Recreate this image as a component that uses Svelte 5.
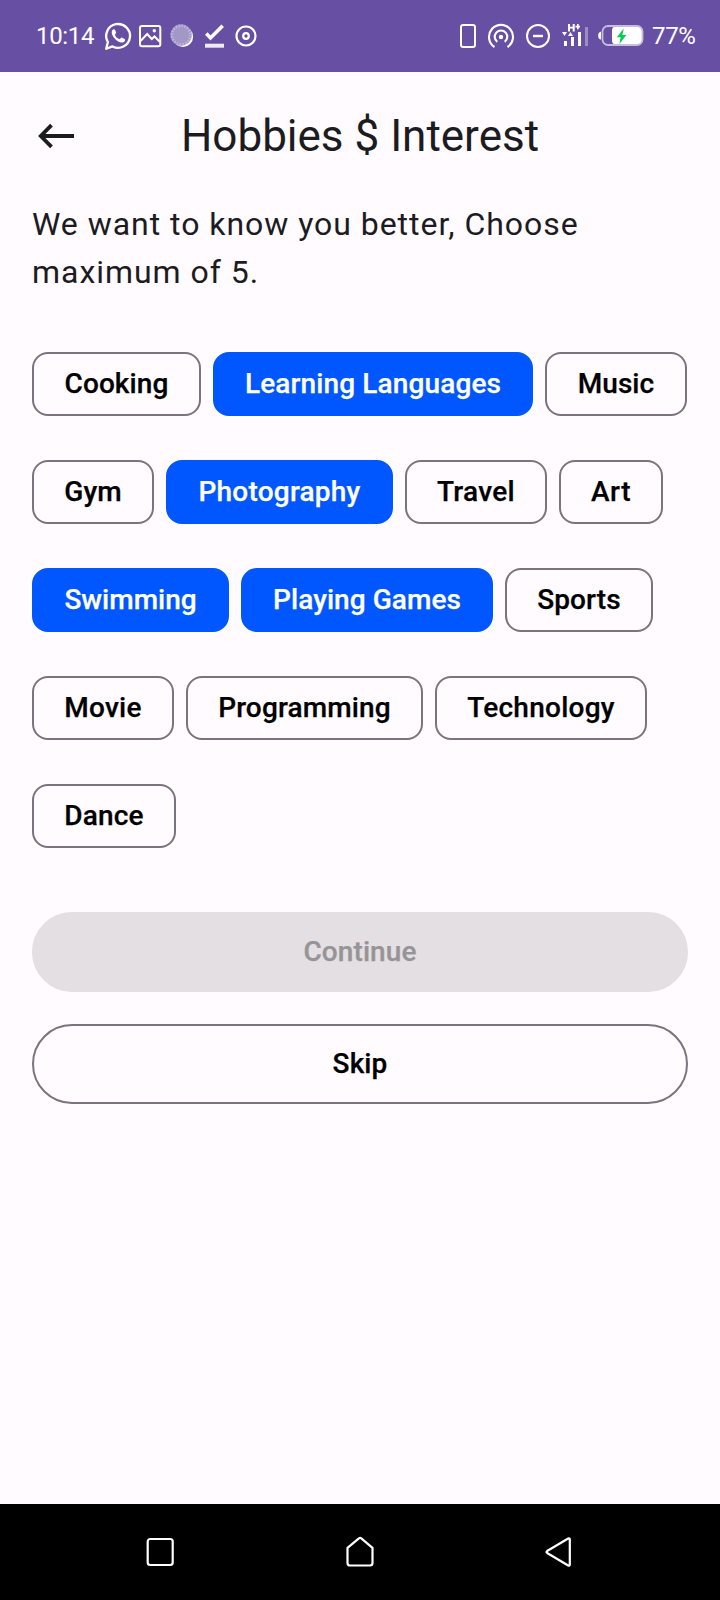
<script>
  const max = 5;
  let hobbies = $state([
    { name: 'Cooking', width: 169, tracking: 0.1, on: false },
    { name: 'Learning Languages', width: 320, tracking: 0.13, on: true },
    { name: 'Music', width: 142, tracking: 0.05, on: false },
    { name: 'Gym', width: 122, tracking: 0.1, on: false },
    { name: 'Photography', width: 227, tracking: 0.22, on: true },
    { name: 'Travel', width: 142, tracking: 0.3, on: false },
    { name: 'Art', width: 104, tracking: 0.5, on: false },
    { name: 'Swimming', width: 197, tracking: 0, on: true },
    { name: 'Playing Games', width: 252, tracking: 0.05, on: true },
    { name: 'Sports', width: 148, tracking: 0.12, on: false },
    { name: 'Movie', width: 142, tracking: 0.3, on: false },
    { name: 'Programming', width: 237, tracking: 0.15, on: false },
    { name: 'Technology', width: 212, tracking: 0.25, on: false },
    { name: 'Dance', width: 144, tracking: 0.15, on: false }
  ]);
  let count = $derived(hobbies.filter((h) => h.on).length);

  function toggle(h) {
    if (h.on || count < max) h.on = !h.on;
  }
</script>

<div class="screen">
  <div class="status">
    <span class="time">10:14</span>
    <svg class="left-icons" width="160" height="40" viewBox="100 16 160 40" fill="none" stroke="#fff" stroke-width="2">
      <path d="M106.2 48.8l1.7-6.8a11.9 11.9 0 1 1 4.6 4.4z" stroke-width="2.3" stroke-linejoin="round" />
      <path d="M112.3 30.2c.8-1.3 2.3-1.3 2.8-.2l1 2.6c.2.8-1.2 1.8-1.1 2.3.9 2 2.5 3.6 4.6 4.3.6.1 1.6-1.8 2.2-1.6l2.8 1.3c1.1.6.3 2.4-.8 3.1-1.6 1-3.7.5-5.6-.5-2.5-1.4-4.4-3.4-5.6-5.9-.9-2-1.2-3.9-.3-5.4z" fill="#fff" stroke="none" />
      <rect x="140" y="26" width="20.3" height="20.3" rx="2" />
      <path d="M140.5 41l6.700-7 4.600 5 2.700-2.500 5.500 5.500" />
      <circle cx="154.3" cy="30.7" r="1.7" fill="#fff" stroke="none" />
      <circle cx="182.9" cy="36.800" r="10.200" fill="#fff" stroke="none" />
      <circle cx="181.100" cy="35" r="10.700" fill="#a397c8" stroke="none" />
      <circle cx="181.100" cy="35" r="9.200" stroke="#c3badc" stroke-width="2.600" stroke-dasharray="1.200 1.700" />
      <path d="M206.3 33.6l4.2 4.3 12.2-12.2" stroke-width="3.6" />
      <path d="M205 45.7h19" stroke-width="4" stroke="#eeeaf6" />
      <circle cx="246" cy="36" r="9.5" stroke-width="2.2" />
      <circle cx="246" cy="36" r="2.800" stroke-width="2.2" />
    </svg>
    <svg class="right-icons" width="190" height="40" viewBox="456 16 190 40" fill="none" stroke="#fff" stroke-width="2">
      <rect x="461" y="25" width="14" height="22" rx="2.3" />
      <path d="M494.5 47a12 12 0 1 1 13 0" stroke-width="2.1" />
      <path d="M497.3 41.9a6.300 6.300 0 1 1 7.400 0" stroke-width="2.1" />
      <circle cx="501" cy="37" r="2.200" fill="#fff" stroke="none" />
      <circle cx="538" cy="36" r="11" />
      <path d="M533 36h10" stroke-width="2.4" />
      <g fill="#fff" stroke="none">
        <path d="M568 24h2v2.800h2.700V24h2v7.500h-2v-2.900H570v2.900h-2zM577 24h1.700v1.800h1.300v1.700h-1.300v1.800H577v-1.800h-1.500v-1.700h1.500z" />
        <path d="M562 32h5l-2.500 4zM568 36h5l-2.500-4z" />
        <path d="M564 41h3v5h-3zM571 37h3v9h-3zM578 32h3v14h-3z" />
        <path d="M585 27h3v19h-3z" opacity=".35" />
        <path d="M601 31.8v7.800c-1.800 0-2.800-1.700-2.800-3.900s1-3.900 2.800-3.900z" />
        <rect x="612" y="26.500" width="30" height="18" rx="4" />
      </g>
      <rect x="602.5" y="26" width="40" height="19" rx="5.500" stroke="#c6bddd" stroke-width="1.800" />
      <path d="M623.8 28.500l-7 8.800h3.800l-1.200 6.700 7-9h-4z" fill="#0bcb54" stroke="none" />
    </svg>
    <span class="pct">77%</span>
  </div>

  <header>
    <button class="back" aria-label="Back">
      <svg width="40" height="32" viewBox="36 120 40 32" fill="none" stroke="#1c1b1f" stroke-width="3.8">
        <path d="M74 136H42M51.500 125.200L40.800 136l10.700 10.800" />
      </svg>
    </button>
    <h1>Hobbies $ Interest</h1>
  </header>

  <main>
    <p>We want to know you better, Choose maximum of 5.</p>
    <div class="chips">
      {#each hobbies as h}
        <button
          class="chip"
          class:on={h.on}
          aria-pressed={h.on}
          style="width: {h.width}px; letter-spacing: {h.tracking}px"
          onclick={() => toggle(h)}>{h.name}</button>
      {/each}
    </div>
    <button class="action continue" disabled={count < max}>Continue</button>
    <button class="action skip">Skip</button>
  </main>

  <nav>
    <svg width="32" height="36" viewBox="0 0 32 36"><rect x="3.700" y="5" width="25" height="26" rx="2.500" /></svg>
    <svg width="32" height="36" viewBox="0 0 32 36"><path d="M3.500 13.800L14.900 4.300q1.200-.8 2.400 0l11.200 9.500V29q0 2.500-2.500 2.500H6Q3.500 31.500 3.500 29z" /></svg>
    <svg width="32" height="36" viewBox="0 0 32 36"><path d="M3.100 17L24.200 4.500q1.600-.6 1.600 1v25q0 1.800-1.600 1L3.100 19q-1.300-1 0-2z" /></svg>
  </nav>
</div>

<style>
  :global(body) {
    margin: 0;
  }
  .screen {
    width: 720px;
    height: 1600px;
    display: flex;
    flex-direction: column;
    background: #fffbff;
    color: #1c1b1f;
    font-family: Roboto, sans-serif;
    overflow: hidden;
  }
  button {
    font: inherit;
    margin: 0;
    padding: 0;
    border: 0;
    background: none;
    box-sizing: border-box;
  }
  svg {
    display: block;
    flex: none;
  }
  .status {
    height: 72px;
    flex: none;
    display: flex;
    align-items: center;
    background: #6750a4;
    color: #fff;
    font-size: 24px;
    line-height: 28px;
    letter-spacing: -0.35px;
  }
  .time {
    width: 64px;
    margin-left: 36px;
  }
  .left-icons {
    margin-right: 196px;
  }
  .pct {
    margin-left: 6px;
  }
  header {
    height: 128px;
    flex: none;
    display: grid;
    grid-template-columns: 40px 1fr 40px;
    align-items: center;
    padding: 0 36px;
    box-sizing: border-box;
  }
  h1 {
    margin: 0;
    text-align: center;
    font-size: 44px;
    line-height: 56px;
    font-weight: 400;
  }
  main {
    flex: 1;
    display: flex;
    flex-direction: column;
    padding: 0 32px;
  }
  p {
    margin: 0;
    font-size: 32px;
    line-height: 48px;
    letter-spacing: 0.96px;
  }
  .chips {
    display: flex;
    flex-wrap: wrap;
    gap: 44px 12px;
    margin: 56px 0 64px;
  }
  .chip,
  .action {
    font-size: 28px;
    line-height: 40px;
    font-weight: 500;
    letter-spacing: 0.1px;
    color: #000;
    border: 2px solid #79747e;
    white-space: nowrap;
    -webkit-text-stroke: 0.25px currentColor;
  }
  .chip {
    height: 64px;
    border-radius: 16px;
  }
  .chip.on {
    background: #0057ff;
    border-color: #0057ff;
    color: #fff;
  }
  .action {
    height: 80px;
    flex: none;
    border-radius: 40px;
  }
  .continue {
    margin-bottom: 32px;
    background: #0057ff;
    border-color: #0057ff;
    color: #fff;
  }
  .continue:disabled {
    background: #e4dfe2;
    border-color: #e4dfe2;
    color: #979497;
  }
  nav {
    height: 96px;
    flex: none;
    display: flex;
    justify-content: space-between;
    align-items: center;
    padding: 0 144px;
    background: #000;
  }
  nav svg {
    fill: none;
    stroke: #fff;
    stroke-width: 2.2;
    stroke-linejoin: round;
  }
</style>
